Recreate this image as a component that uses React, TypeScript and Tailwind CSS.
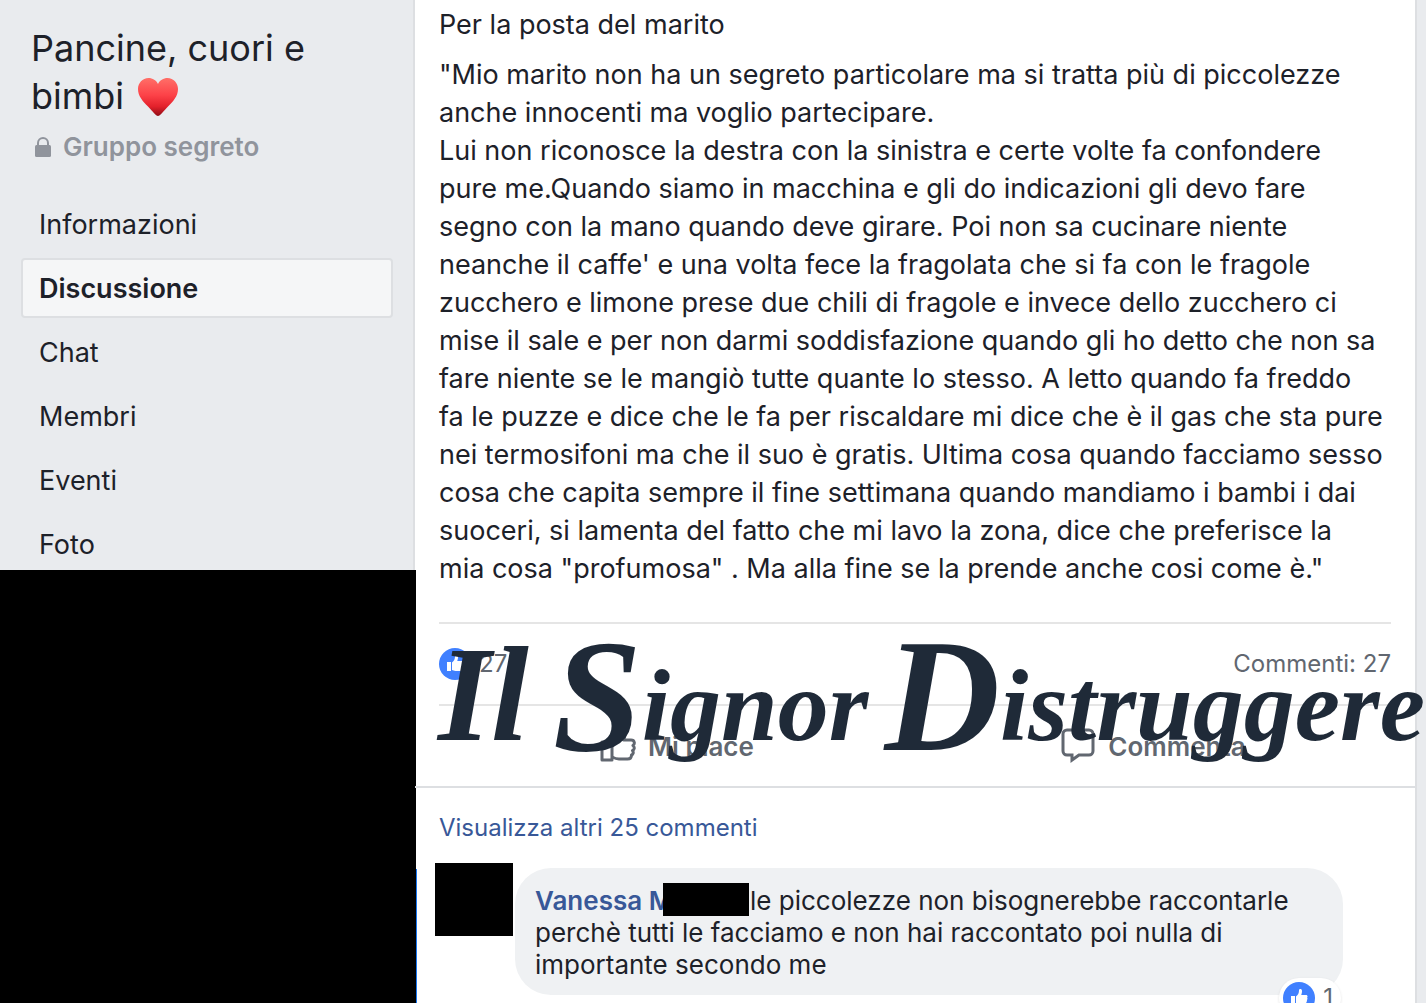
import React from 'react';
import clsx from 'clsx';

const navItems = ['Informazioni', 'Discussione', 'Chat', 'Membri', 'Eventi', 'Foto'];

const postLines = [
  '"Mio marito non ha un segreto particolare ma si tratta più di piccolezze',
  'anche innocenti ma voglio partecipare.',
  'Lui non riconosce la destra con la sinistra e certe volte fa confondere',
  'pure me.Quando siamo in macchina e gli do indicazioni gli devo fare',
  'segno con la mano quando deve girare. Poi non sa cucinare niente',
  "neanche il caffe' e una volta fece la fragolata che si fa con le fragole",
  'zucchero e limone prese due chili di fragole e invece dello zucchero ci',
  'mise il sale e per non darmi soddisfazione quando gli ho detto che non sa',
  'fare niente se le mangiò tutte quante lo stesso. A letto quando fa freddo',
  'fa le puzze e dice che le fa per riscaldare mi dice che è il gas che sta pure',
  'nei termosifoni ma che il suo è gratis. Ultima cosa quando facciamo sesso',
  'cosa che capita sempre il fine settimana quando mandiamo i bambi i dai',
  'suoceri, si lamenta del fatto che mi lavo la zona, dice che preferisce la',
  'mia cosa "profumosa" . Ma alla fine se la prende anche cosi come è."',
];

function Heart() {
  return (
    <svg className="inline-block w-10 h-10 ml-3.5 align-[-8px]" viewBox="0 0 40 40" role="img" aria-label="cuore">
      <defs>
        <linearGradient id="heart" x1="0" y1="0" x2="0" y2="1">
          <stop offset="0" stopColor="#ff6f68" />
          <stop offset="0.45" stopColor="#fd4248" />
          <stop offset="0.75" stopColor="#e3212b" />
          <stop offset="1" stopColor="#8f0d16" />
        </linearGradient>
      </defs>
      <path
        fill="url(#heart)"
        d="M20 39C18 39 14.500 34 10 29.500C4.500 24 0 19 0 12C0 6 4.500 1 10.500 1C14.500 1 18.500 3.500 20 7C21.500 3.500 25.500 1 29.500 1C35.500 1 40 6 40 12C40 19 35.500 24 30 29.500C25.500 34 22 39 20 39Z"
      />
    </svg>
  );
}

function Lock() {
  return (
    <svg className="w-4 h-5 shrink-0" viewBox="0 0 16 20" fill="none" aria-hidden="true">
      <path d="M3 9V6a5 5 0 0 1 10 0v3" stroke="#90949c" strokeWidth="2" />
      <rect y="8" width="16" height="12" rx="1.500" fill="#90949c" />
    </svg>
  );
}

function LikeBadge() {
  return (
    <svg className="w-8 h-8 shrink-0" viewBox="0 0 32 32" aria-hidden="true">
      <circle cx="16" cy="16" r="16" fill="#4080ff" />
      <path
        fill="#fff"
        d="M8 14h4v9H8zM13 14.500c2-1.500 3-3.500 3-6c0-2 3-2 3 .500c0 1.800-.400 3-.800 4H23c1.600 0 2 1.700 1 2.600c.700.700.600 1.800-.200 2.300c.500.800.200 1.700-.500 2.100c.300 1.700-.500 3-2.300 3h-4.500c-1.500 0-2.500-.500-3.500-.900z"
      />
    </svg>
  );
}

function LikeIcon() {
  return (
    <svg className="w-9 h-9" viewBox="0 0 36 36" fill="none" stroke="#616770" strokeWidth="3" strokeLinejoin="round" aria-hidden="true">
      <path d="M2 14h10v18H2z" />
      <path d="M12 16c5-3 6-7 6-11c0-5 7-4 7 1c0 3-.500 4-1.500 6H31c4 0 4 4 2 5.500c2 2 1.500 4-.500 5c1.500 2 .500 4-1 4.500c0 3-1.500 4-4 4H19c-3 0-5-1-7-2" />
    </svg>
  );
}

function CommentIcon() {
  return (
    <svg className="w-9 h-9" viewBox="0 0 36 36" fill="none" stroke="#616770" strokeWidth="3" aria-hidden="true">
      <path d="M7 2h22a4 4 0 0 1 4 4v17a4 4 0 0 1-4 4H19l-7 5v-5H7a4 4 0 0 1-4-4V6a4 4 0 0 1 4-4Z" />
    </svg>
  );
}

function Sidebar() {
  return (
    <aside className="w-[415px] shrink-0 flex flex-col text-[#1d2129]">
      <div className="h-[570px] border-r-2 border-[#dddfe2] pt-6 pr-5">
        <h1 className="pl-[31px] text-[36px] leading-[48px]">
          Pancine, cuori e<br />
          bimbi
          <Heart />
        </h1>
        <p className="flex items-center gap-3 mt-2 pl-[35px] text-[26px] leading-[38px] font-semibold text-[#90949c]">
          <Lock />
          Gruppo segreto
        </p>
        <nav className="flex flex-col gap-1 mt-7 pl-[21px]">
          {navItems.map((item) => (
            <a
              key={item}
              href="#"
              className={clsx(
                'h-[60px] flex items-center px-4 pt-0.5 border-2 rounded-sm text-[27px]',
                item === 'Discussione' ? 'bg-[#f5f6f7] border-[#dddfe2] font-semibold' : 'border-transparent'
              )}
            >
              {item}
            </a>
          ))}
        </nav>
      </div>
      <div className="relative flex-1 bg-black -mr-px" />
    </aside>
  );
}

// Signature laid over the post footer
function Signature() {
  return (
    <div className="absolute left-[23px] -top-2 flex items-baseline whitespace-nowrap pointer-events-none select-none font-['Liberation_Serif',serif] font-bold italic text-[102px] leading-[160px] text-[#1f2a38]">
      <span className="text-[136px]">Il</span>
      <span className="ml-6">
        <span className="text-[160px] align-[-10px]">S</span>ignor
      </span>
      <span className="ml-4">
        <span className="text-[160px] align-[-10px]">D</span>istruggere
      </span>
    </div>
  );
}

function Post() {
  return (
    <article>
      <div className="px-6 pt-1.5 text-[27px] leading-[38px] whitespace-nowrap">
        <p>Per la posta del marito</p>
        <p className="mt-3">
          {postLines.map((line) => (
            <React.Fragment key={line}>
              {line}
              <br />
            </React.Fragment>
          ))}
        </p>
      </div>

      <footer className="relative mt-[34px] border-b-2 border-[#dddfe2] text-[#616770]">
        <div className="mx-6 h-[82px] flex items-center justify-between border-t-2 border-[#e5e5e5] text-2xl">
          <span className="flex items-center gap-2">
            <LikeBadge />
            27
          </span>
          <a href="#">Commenti: 27</a>
        </div>
        <div className="mx-6 h-[82px] grid grid-cols-2 border-t-2 border-[#e5e5e5] text-[26px] font-semibold">
          <button type="button" className="flex items-center justify-center gap-3">
            <LikeIcon />
            Mi piace
          </button>
          <button type="button" className="flex items-center justify-center gap-3">
            <CommentIcon />
            Commenta
          </button>
        </div>
        <Signature />
      </footer>
    </article>
  );
}

function Comments() {
  return (
    <section>
      <a href="#" className="block pt-[22px] px-6 h-[81px] text-2xl leading-9 text-[#385898]">
        Visualizza altri 25 commenti
      </a>
      <div className="ml-px h-40 flex items-start gap-0.5 border-l border-[#1877f2] pl-[18px]">
        <div className="w-[78px] h-[73px] -mt-1.5 shrink-0 bg-black" />
        <div className="relative w-[828px] -mt-px px-5 pt-[17px] pb-[14px] rounded-[36px] bg-[#eff1f3] text-[26px] leading-8 whitespace-nowrap">
          <p>
            <a href="#" className="relative inline-block w-[215px] font-semibold text-[#385898]">
              Vanessa M
              <span className="absolute left-32 -top-0.5 w-[86px] h-[33px] bg-black" />
            </a>
            le piccolezze non bisognerebbe raccontarle
            <br />
            perchè tutti le facciamo e non hai raccontato poi nulla di
            <br />
            importante secondo me
          </p>
          <button
            type="button"
            className="absolute right-0.5 top-[110px] flex items-center gap-2 h-10 pl-1 pr-2 rounded-full bg-white shadow text-2xl text-[#616770]"
          >
            <LikeBadge />1
          </button>
        </div>
      </div>
    </section>
  );
}

export default function App() {
  return (
    <div className="h-screen flex overflow-hidden bg-[#e9ebee] font-[Inter,sans-serif] text-[#1d2129]">
      <Sidebar />
      <main className="flex-1 min-w-0 mr-[9px] bg-white border-r-2 border-[#dddfe2]">
        <Post />
        <Comments />
      </main>
    </div>
  );
}
